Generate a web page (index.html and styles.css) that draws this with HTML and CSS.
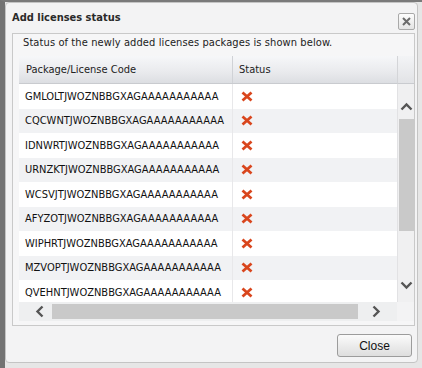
FILE: index.html
```html
<!DOCTYPE html>
<html lang="en">

<head>
    <meta charset="UTF-8">
    <title>Add licenses status</title>
    <link rel="stylesheet" href="styles.css">
</head>

<body>
    <div class="frame">
        <div class="dialog">
            <div class="titlebar">
                <span class="title">Add licenses status</span>
                <span class="close-x">
                    <svg width="9" height="9" viewBox="0 0 9 9"><path d="M1 1L8 8M8 1L1 8" stroke="#6b6b6b" stroke-width="2"/></svg>
                </span>
            </div>
            <div class="panel">
                <p class="msg">Status of the newly added licenses packages is shown below.</p>
                <div class="grid">
                    <div class="head">
                        <div class="th th-code">Package/License Code</div>
                        <div class="th th-status">Status</div>
                    </div>
                    <div class="head-fill"></div>
                    <div class="rows">
                        <div class="row"><div class="td td-code">GMLOLTJWOZNBBGXAGAAAAAAAAAAA</div><div class="td"><svg class="fail" viewBox="0 0 12 11"><path d="M1.5 1.5L10.5 9.5M10.5 1.5L1.5 9.5"/></svg></div></div>
                        <div class="row"><div class="td td-code">CQCWNTJWOZNBBGXAGAAAAAAAAAAA</div><div class="td"><svg class="fail" viewBox="0 0 12 11"><path d="M1.5 1.5L10.5 9.5M10.5 1.5L1.5 9.5"/></svg></div></div>
                        <div class="row"><div class="td td-code">IDNWRTJWOZNBBGXAGAAAAAAAAAAA</div><div class="td"><svg class="fail" viewBox="0 0 12 11"><path d="M1.5 1.5L10.5 9.5M10.5 1.5L1.5 9.5"/></svg></div></div>
                        <div class="row"><div class="td td-code">URNZKTJWOZNBBGXAGAAAAAAAAAAA</div><div class="td"><svg class="fail" viewBox="0 0 12 11"><path d="M1.5 1.5L10.5 9.5M10.5 1.5L1.5 9.5"/></svg></div></div>
                        <div class="row"><div class="td td-code">WCSVJTJWOZNBBGXAGAAAAAAAAAAA</div><div class="td"><svg class="fail" viewBox="0 0 12 11"><path d="M1.5 1.5L10.5 9.5M10.5 1.5L1.5 9.5"/></svg></div></div>
                        <div class="row"><div class="td td-code">AFYZOTJWOZNBBGXAGAAAAAAAAAAA</div><div class="td"><svg class="fail" viewBox="0 0 12 11"><path d="M1.5 1.5L10.5 9.5M10.5 1.5L1.5 9.5"/></svg></div></div>
                        <div class="row"><div class="td td-code">WIPHRTJWOZNBBGXAGAAAAAAAAAAA</div><div class="td"><svg class="fail" viewBox="0 0 12 11"><path d="M1.5 1.5L10.5 9.5M10.5 1.5L1.5 9.5"/></svg></div></div>
                        <div class="row"><div class="td td-code">MZVOPTJWOZNBBGXAGAAAAAAAAAAA</div><div class="td"><svg class="fail" viewBox="0 0 12 11"><path d="M1.5 1.5L10.5 9.5M10.5 1.5L1.5 9.5"/></svg></div></div>
                        <div class="row"><div class="td td-code">QVEHNTJWOZNBBGXAGAAAAAAAAAAA</div><div class="td"><svg class="fail" viewBox="0 0 12 11"><path d="M1.5 1.5L10.5 9.5M10.5 1.5L1.5 9.5"/></svg></div></div>
                    </div>
                    <div class="vscroll">
                        <svg class="arrow" width="13" height="9" viewBox="0 0 13 9"><path d="M1.5 7.5L6.5 2.5L11.5 7.5"/></svg>
                        <div class="vthumb"></div>
                        <div class="vspace"></div>
                        <svg class="arrow" width="13" height="9" viewBox="0 0 13 9"><path d="M1.5 1.5L6.5 6.5L11.5 1.5"/></svg>
                    </div>
                    <div class="hscroll">
                        <svg class="arrow" width="9" height="13" viewBox="0 0 9 13"><path d="M7.5 1.5L2.5 6.5L7.5 11.5"/></svg>
                        <div class="hthumb"></div>
                        <svg class="arrow" width="9" height="13" viewBox="0 0 9 13"><path d="M1.5 1.5L6.5 6.5L1.5 11.5"/></svg>
                    </div>
                    <div class="corner"></div>
                </div>
            </div>
            <div class="buttons">
                <button class="btn">Close</button>
            </div>
        </div>
    </div>
</body>

</html>
```

FILE: styles.css
```css
body {
    margin: 0;
    font-family: "DejaVu Sans Condensed", "DejaVu Sans", sans-serif;
    font-stretch: condensed;
    font-size: 11px;
    color: #1e1e1e;
}

.frame {
    width: 422px;
    height: 368px;
    box-sizing: border-box;
    border-left: 5px solid #737373;
    border-top: 2px solid #7a7a7a;
    background: #e6e6e6;
}

.dialog {
    width: 413px;
    height: 361px;
    box-sizing: border-box;
    border: 1px solid #c4c4c4;
    border-radius: 4px;
    background: #f3f3f4;
}

.titlebar {
    display: flex;
    align-items: center;
    justify-content: space-between;
    height: 29px;
    padding: 0 2px 0 6px;
}

.title {
    font-weight: bold;
    font-size: 11px;
    color: #2a2a2a;
}

.close-x {
    display: flex;
    align-items: center;
    justify-content: center;
    width: 15px;
    height: 15px;
    margin-top: 8px;
    border: 1px solid #a9a9a9;
    border-radius: 2px;
    background: linear-gradient(#fdfdfd, #e4e4e4);
}

.panel {
    margin: 1px 2px 0 6px;
    height: 293px;
    box-sizing: border-box;
    border: 1px solid #c9c9c9;
    background: #f6f6f7;
    padding: 0 0 0 6px;
}

.msg {
    margin: 0;
    height: 22px;
    line-height: 17px;
    padding-left: 4px;
    letter-spacing: 0.1px;
    color: #222;
}

.grid {
    display: grid;
    grid-template-columns: 378px 17px;
    grid-template-rows: 28px 218px 19px;
}

.head {
    display: flex;
    background: linear-gradient(#f6f7f9, #e9eaed 60%, #dcdee2);
    border-bottom: 1px solid #c9cbcf;
    box-sizing: border-box;
}

.head-fill {
    background: linear-gradient(#f3f4f6, #e2e3e6);
    border-left: 1px solid #d4d5d8;
    border-bottom: 1px solid #c9cbcf;
    box-sizing: border-box;
}

.th {
    display: flex;
    align-items: center;
    color: #222;
}

.th-code {
    width: 214px;
    padding-left: 7px;
    box-sizing: border-box;
    border-right: 1px solid #d0d2d6;
}

.th-status {
    padding-left: 6px;
}

.rows {
    overflow: hidden;
    background: #fff;
}

.row {
    display: flex;
    height: 24.5px;
    background: #fff;
}

.row:nth-child(even) {
    background: #f1f2f4;
}

.td {
    display: flex;
    align-items: center;
    padding-left: 8px;
}

.td-code {
    width: 214px;
    box-sizing: border-box;
    padding-left: 6px;
    border-right: 1px solid #e8e8ea;
    color: #111;
}

.fail {
    width: 12px;
    height: 11px;
    fill: none;
    stroke: #d9461d;
    stroke-width: 2.8;
}

.arrow {
    fill: none;
    stroke: #555;
    stroke-width: 2.4;
}

.vscroll {
    display: flex;
    flex-direction: column;
    align-items: center;
    background: #f0f0f1;
    border-left: 1px solid #e2e2e4;
    box-sizing: border-box;
    padding: 18px 0 12px;
}

.vthumb {
    width: 15px;
    height: 112px;
    margin-top: 8px;
    background: #c9c9c9;
}

.vspace {
    flex: 1;
}

.hscroll {
    display: flex;
    align-items: center;
    background: #eeeff0;
    padding: 0 16px 0 16px;
}

.hthumb {
    width: 306px;
    height: 15px;
    margin: 0 14px 0 8px;
    background: #c9c9c9;
}

.corner {
    background: #f3f3f4;
}

.buttons {
    display: flex;
    justify-content: flex-end;
    padding: 8px 5px 0 0;
}

.btn {
    width: 75px;
    height: 23px;
    font-family: "Liberation Sans", Arial, sans-serif;
    font-size: 12px;
    color: #111;
    border: 1px solid #9c9c9c;
    border-radius: 3px;
    background: linear-gradient(#fbfbfb, #ececec 50%, #dedede);
}
```
